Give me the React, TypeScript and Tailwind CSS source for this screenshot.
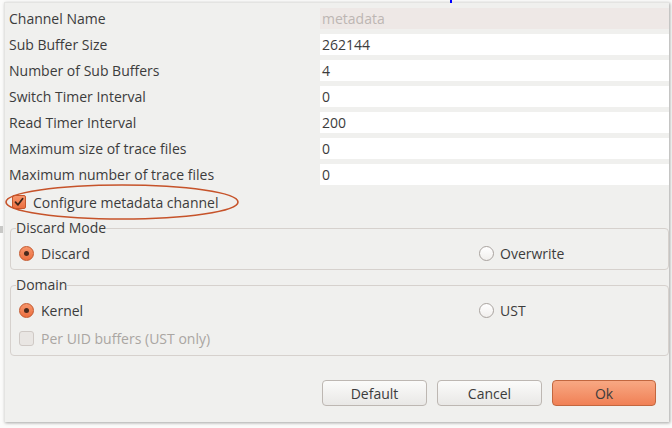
import React from "react";

const rows: { label: string; value: string; disabled?: boolean }[] = [
  { label: "Channel Name", value: "metadata", disabled: true },
  { label: "Sub Buffer Size", value: "262144" },
  { label: "Number of Sub Buffers", value: "4" },
  { label: "Switch Timer Interval", value: "0" },
  { label: "Read Timer Interval", value: "200" },
  { label: "Maximum size of trace files", value: "0" },
  { label: "Maximum number of trace files", value: "0" },
];

function Radio({ checked }: { checked?: boolean }) {
  return checked ? (
    <span className="flex h-[15px] w-[15px] items-center justify-center rounded-full border border-[#c4572c] bg-gradient-to-b from-[#f6956b] to-[#ec6f3f]">
      <span className="h-[5px] w-[5px] rounded-full bg-[#4a2a1c]" />
    </span>
  ) : (
    <span className="h-[15px] w-[15px] rounded-full border border-[#a9a39f] bg-gradient-to-b from-[#ffffff] to-[#f1efed]" />
  );
}

function Check({ checked, disabled }: { checked?: boolean; disabled?: boolean }) {
  if (checked)
    return (
      <span className="flex h-[14px] w-[14px] items-center justify-center rounded-[2px] border border-[#c4572c] bg-gradient-to-b from-[#f6956b] to-[#ec6f3f]">
        <svg width="10" height="10" viewBox="0 0 10 10">
          <path d="M1.5 5.2 L4 7.8 L8.6 1.8" fill="none" stroke="#3a2418" strokeWidth="1.8" strokeLinecap="round" strokeLinejoin="round" />
        </svg>
      </span>
    );
  return (
    <span
      className={
        disabled
          ? "h-[15px] w-[15px] rounded-[3px] border border-[#cfc9c5] bg-[#e9e6e3]"
          : "h-[15px] w-[15px] rounded-[3px] border border-[#a9a39f] bg-white"
      }
    />
  );
}

export default function App() {
  return (
    <div
      className="relative h-[428px] w-[672px] overflow-hidden bg-[#fbfbfa] text-[14px] text-[#3c3c3c]"
      style={{ fontFamily: '"Open Sans", "Noto Sans", sans-serif' }}
    >
      <div className="absolute left-[450px] top-0 h-[3px] w-[2px] bg-[#0000ff]" />
      <div className="absolute left-0 top-[226px] h-[7px] w-[3px] bg-[#c8c8c6]" />
      <div className="ml-[4px] mt-[2px] flex h-[420px] w-[665px] flex-col border-l border-t border-[#e4e4e2] bg-[#f0f0ee] pt-[5px] shadow-[1px_1px_3px_rgba(0,0,0,0.35)]">
        <div className="flex flex-col gap-[5px]">
          {rows.map((r) => (
            <div key={r.label} className="flex h-[21px] items-center">
              <div className="w-[315px] pl-[4px]">{r.label}</div>
              <div
                className={
                  r.disabled
                    ? "flex h-[21px] flex-1 items-center bg-[#eee8e6] pl-[2px] text-[#bdb6b3]"
                    : "flex h-[21px] flex-1 items-center bg-white pl-[2px]"
                }
              >
                {r.value}
              </div>
            </div>
          ))}
        </div>

        <div className="relative mt-[7px] flex h-[20px] items-center pl-[7px]">
          <svg className="absolute left-[-1px] top-[-9px]" width="240" height="38" viewBox="0 0 240 38">
            <ellipse cx="118" cy="19" rx="116" ry="17" fill="none" stroke="#c6532a" strokeWidth="1.6" />
          </svg>
          <Check checked />
          <span className="ml-[7px]">Configure metadata channel</span>
        </div>

        <fieldset className="ml-[5px] mt-[7px] rounded-[4px] border border-[#d6d1cd] px-[5px] pb-[7px] pt-[7px]">
          <legend className="leading-[18px]">Discard Mode</legend>
          <div className="flex h-[18px] items-center">
            <div className="flex w-[463px] items-center pl-[3px]">
              <Radio checked />
              <span className="ml-[7px]">Discard</span>
            </div>
            <div className="flex items-center">
              <Radio />
              <span className="ml-[6px]">Overwrite</span>
            </div>
          </div>
        </fieldset>

        <fieldset className="ml-[5px] mt-[6px] rounded-[4px] border border-[#d6d1cd] px-[5px] pb-[8px] pt-[7px]">
          <legend className="leading-[18px]">Domain</legend>
          <div className="flex h-[18px] items-center">
            <div className="flex w-[463px] items-center pl-[3px]">
              <Radio checked />
              <span className="ml-[7px]">Kernel</span>
            </div>
            <div className="flex items-center">
              <Radio />
              <span className="ml-[6px]">UST</span>
            </div>
          </div>
          <div className="mt-[10px] flex h-[18px] items-center pl-[3px] text-[#aaa6a2]">
            <Check disabled />
            <span className="ml-[7px]">Per UID buffers (UST only)</span>
          </div>
        </fieldset>

        <div className="mt-[24px] flex justify-end gap-[10px] pr-[13px]">
          <button className="flex h-[26px] w-[105px] items-center justify-center rounded-[4px] border border-[#bdb7b2] bg-gradient-to-b from-[#fbfbfa] to-[#e9e8e6]">
            Default
          </button>
          <button className="flex h-[26px] w-[105px] items-center justify-center rounded-[4px] border border-[#bdb7b2] bg-gradient-to-b from-[#fbfbfa] to-[#e9e8e6]">
            Cancel
          </button>
          <button className="flex h-[26px] w-[104px] items-center justify-center rounded-[4px] border border-[#c2673f] bg-gradient-to-b from-[#f8a883] to-[#f08055]">
            Ok
          </button>
        </div>
      </div>
    </div>
  );
}
